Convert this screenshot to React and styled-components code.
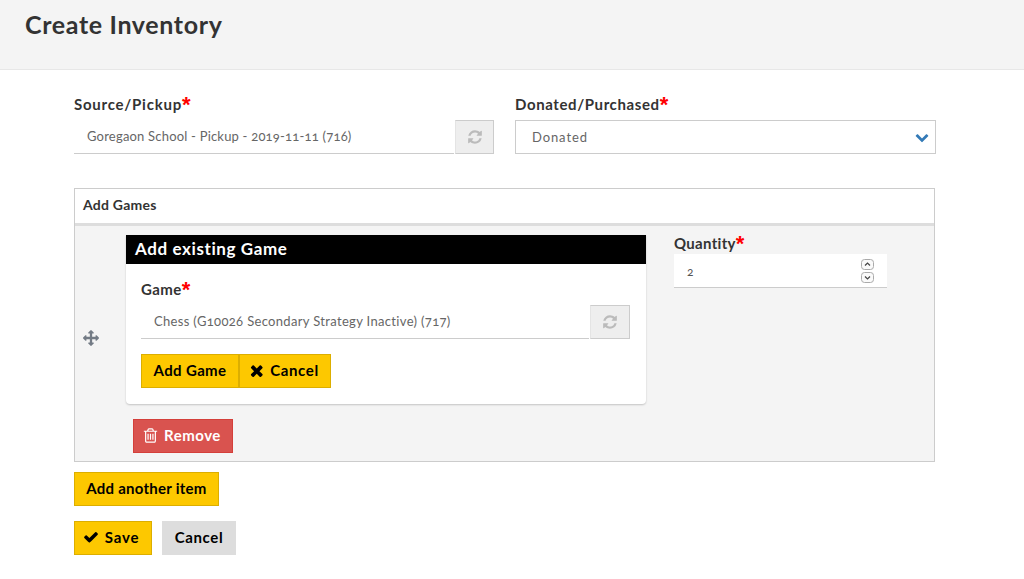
import React from "react";
import styled, { createGlobalStyle } from "styled-components";

const Global = createGlobalStyle`
  html, body { margin: 0; padding: 0; background: #fff; }
  body { font-family: Lato, "Open Sans", sans-serif; color: #333; font-size: 13px; font-variant-numeric: oldstyle-nums; }
`;
const Page = styled.div`width: 1024px; height: 579px; overflow: hidden;`;
const Header = styled.header`
  height: 70px; box-sizing: border-box; background: #f4f4f4; border-bottom: 1px solid #e7e7e7; padding: 9px 0 0 25px;
`;
const Title = styled.h1`
  margin: 0; font-size: 25px; line-height: 30px; font-weight: 700; color: #333; letter-spacing: .65px;
`;
const Content = styled.main`padding: 25px 88px 0 74px;`;
const TopRow = styled.div`display: grid; grid-template-columns: 420px 421px; column-gap: 21px; width: 862px;`;
const Field = styled.div`display: flex; flex-direction: column;`;
const Label = styled.label`
  display: block; font-size: 15px; line-height: 18px; font-weight: 700; color: #333; height: 20px; margin-bottom: ${p => p.$mb ?? 5}px;
  letter-spacing: ${p => p.$ls ?? .5}px; white-space: nowrap;
`;
const Star = styled.span`
  color: #f00; font-family: "Liberation Sans", sans-serif; font-size: 22px; line-height: 16px; letter-spacing: 0; vertical-align: -2px;
`;
const InputRow = styled.div`display: flex; height: 34px;`;
const TextValue = styled.div`
  flex: 1; box-sizing: border-box; height: 34px; border-bottom: 1px solid #ccc; background: #fff; margin-right: 1px;
  padding: 0 13px; font-size: 13px; line-height: 33px; color: #666; letter-spacing: ${p => p.$ls ?? .33}px; white-space: nowrap;
`;
const Addon = styled.div`
  width: ${p => p.$w || 39}px; height: 34px; box-sizing: border-box; background: #eee; border: 1px solid #ccc; border-left-color: #e4e4e4;
  display: flex; align-items: center; justify-content: center; color: #bbb;
`;
const Select = styled.div`
  height: 34px; box-sizing: border-box; border: 1px solid #ccc; display: flex; align-items: center; justify-content: space-between;
  padding: 0 6px 0 16px; font-size: 13px; color: #666; letter-spacing: .9px;
`;
const Chevron = styled.span`color: #337ab7; display: flex;`;
const Box = styled.section`
  margin-top: 34px; width: 861px; height: 274px; box-sizing: border-box; border: 1px solid #ccc; background: #f4f4f4; display: flex; flex-direction: column;
`;
const BoxHead = styled.div`
  height: 37px; box-sizing: border-box; background: #fff; border-bottom: 3px solid #ddd; padding: 0 8px; font-size: 14px; line-height: 32px; font-weight: 700; color: #333; letter-spacing: .25px;
`;
const BoxBody = styled.div`display: flex; padding: 9px 0 0 8px;`;
const Handle = styled.div`
  width: 43px; height: 206px; display: flex; align-items: center; color: #737b85; flex: none;
`;
const Left = styled.div`width: 520px; flex: none;`;
const Card = styled.div`
  height: 169px; box-sizing: border-box; background: #fff; border-radius: 0 0 4px 4px; box-shadow: 0 1px 2px rgba(0,0,0,.2);
`;
const CardHead = styled.div`
  height: 29px; background: #000; color: #fff; padding-left: 9px; font-size: 17px; font-weight: 700; line-height: 28px; letter-spacing: .6px;
`;
const CardBody = styled.div`padding: 16px 16px 0 15px;`;
const ButtonRow = styled.div`display: flex; margin-top: 15px;`;
const Btn = styled.button`
  font-family: inherit; box-sizing: border-box; height: 34px; width: ${p => p.$w}px; margin: 0;
  padding: 0 ${p => p.$pr || 0}px 2px 0;
  display: inline-flex; align-items: center; justify-content: center; gap: ${p => p.$gap || 6}px;
  font-size: 15px; font-weight: 700; letter-spacing: ${p => p.$ls ?? .3}px; color: ${p => p.$color || "#000"};
  background: ${p => p.$bg || "#fdc800"}; border: 1px solid ${p => p.$bd || "#dcae00"}; border-radius: 0; white-space: nowrap;
`;
const RemoveWrap = styled.div`margin: 15px 0 0 7px;`;
const QuantityCol = styled.div`width: 213px; margin: -1px 0 0 28px; flex: none;`;
const QuantityInput = styled.div`
  position: relative; box-sizing: border-box; height: 34px; background: #fff; border-bottom: 1px solid #ccc;
  padding-left: 13px; font-size: 12px; line-height: 35px; color: #555;
`;
const Spinner = styled.div`
  position: absolute; right: 13px; top: 5px; display: flex; flex-direction: column;
`;
const SpinBtn = styled.svg`width: 13px; height: 11px; display: block; margin-bottom: 2px;`;
const Actions = styled.div`display: flex; margin-top: ${p => p.$mt}px; gap: 10px;`;
const Glyph = styled.svg`display: block; flex: none; fill: currentColor;`;

const FA = {
  refresh: "M1639 1056q0 5-1 7-64 268-268 434.500t-478 166.500q-146 0-282.500-55t-243.500-157l-129 129q-19 19-45 19t-45-19-19-45v-448q0-26 19-45t45-19h448q26 0 45 19t19 45-19 45l-137 137q71 66 161 102t187 36q134 0 250-65t186-179q11-17 53-117 8-23 30-23h192q13 0 22.500 9.500t9.500 22.500zm25-800v448q0 26-19 45t-45 19h-448q-26 0-45-19t-19-45 19-45l138-138q-148-137-349-137-134 0-250 65t-186 179q-11 17-53 117-8 23-30 23h-199q-13 0-22.500-9.500t-9.500-22.500v-7q65-268 270-434.500t480-166.500q146 0 284 55.500t245 156.500l130-129q19-19 45-19t45 19 19 45z",
  chevron: "M1683 808l-742 741q-19 19-45 19t-45-19l-742-741q-19-19-19-45.500t19-45.500l166-165q19-19 45-19t45 19l531 531 531-531q19-19 45-19t45 19l166 165q19 19 19 45.500t-19 45.500z",
  arrows: "M1792 896q0 26-19 45l-256 256q-19 19-45 19t-45-19-19-45v-128h-384v384h128q26 0 45 19t19 45-19 45l-256 256q-19 19-45 19t-45-19l-256-256q-19-19-19-45t19-45 45-19h128v-384h-384v128q0 26-19 45t-45 19-45-19l-256-256q-19-19-19-45t19-45l256-256q19-19 45-19t45 19 19 45v128h384v-384h-128q-26 0-45-19t-19-45 19-45l256-256q19-19 45-19t45 19l256 256q19 19 19 45t-19 45-45 19h-128v384h384v-128q0-26 19-45t45-19 45 19l256 256q19 19 19 45z",
  times: "M1490 1322q0 40-28 68l-136 136q-28 28-68 28t-68-28l-294-294-294 294q-28 28-68 28t-68-28l-136-136q-28-28-28-68t28-68l294-294-294-294q-28-28-28-68t28-68l136-136q28-28 68-28t68 28l294 294 294-294q28-28 68-28t68 28l136 136q28 28 28 68t-28 68l-294 294 294 294q28 28 28 68z",
  check: "M1671 566q0 40-28 68l-724 724-136 136q-28 28-68 28t-68-28l-136-136-362-362q-28-28-28-68t28-68l136-136q28-28 68-28t68 28l294 295 656-657q28-28 68-28t68 28l136 136q28 28 28 68z",
  trash: "M704 736v576q0 14-9 23t-23 9h-64q-14 0-23-9t-9-23v-576q0-14 9-23t23-9h64q14 0 23 9t9 23zm256 0v576q0 14-9 23t-23 9h-64q-14 0-23-9t-9-23v-576q0-14 9-23t23-9h64q14 0 23 9t9 23zm256 0v576q0 14-9 23t-23 9h-64q-14 0-23-9t-9-23v-576q0-14 9-23t23-9h64q14 0 23 9t9 23zm128 724v-948h-896v948q0 22 7 40.500t14.500 27 10.500 8.500h832q3 0 10.500-8.500t14.500-27 7-40.500zm-672-1076h448l-48-117q-7-9-17-11h-317q-10 2-17 11zm928 32v64q0 14-9 23t-23 9h-96v948q0 83-47 143.500t-113 60.500h-832q-66 0-113-58.500t-47-141.500v-952h-96q-14 0-23-9t-9-23v-64q0-14 9-23t23-9h309l70-167q15-37 54-63t79-26h320q40 0 79 26t54 63l70 167h309q14 0 23 9t9 23z",
};
const Icon = ({ name, size, box = "0 0 1792 1792" }) => (
  <Glyph width={size} height={size} viewBox={box}><path d={FA[name]} /></Glyph>
);

const Spin = ({ up }) => (
  <SpinBtn viewBox="0 0 13 11">
    <rect x=".5" y=".5" width="12" height="10" rx="3" fill="#fafafa" stroke="#aaa" />
    <path d={up ? "M4 6.500l2.500-2.500L9 6.500" : "M4 4.500l2.500 2.500L9 4.500"} fill="none" stroke="#444" strokeWidth="1.2" />
  </SpinBtn>
);

export default function App() {
  return (
    <Page>
      <Global />
      <Header><Title>Create Inventory</Title></Header>
      <Content>
        <TopRow>
          <Field>
            <Label $ls={.76}>Source/Pickup<Star>*</Star></Label>
            <InputRow>
              <TextValue $ls={.2}>Goregaon School - Pickup - 2019-11-11 (716)</TextValue>
              <Addon><Icon name="refresh" size={16} /></Addon>
            </InputRow>
          </Field>
          <Field>
            <Label $ls={.6}>Donated/Purchased<Star>*</Star></Label>
            <Select>Donated<Chevron><Icon name="chevron" size={14} /></Chevron></Select>
          </Field>
        </TopRow>
        <Box>
          <BoxHead>Add Games</BoxHead>
          <BoxBody>
            <Handle><Icon name="arrows" size={16} /></Handle>
            <Left>
              <Card>
                <CardHead>Add existing Game</CardHead>
                <CardBody>
                  <Label $ls={.4}>Game<Star>*</Star></Label>
                  <InputRow>
                    <TextValue>Chess (G10026 Secondary Strategy Inactive) (717)</TextValue>
                    <Addon $w={40}><Icon name="refresh" size={16} /></Addon>
                  </InputRow>
                  <ButtonRow>
                    <Btn $w={98} $ls={.35}>Add Game</Btn>
                    <Btn $w={92} $gap={7} $ls={.6} $pr={1}><Icon name="times" size={13} box="246 238 1244 1316" />Cancel</Btn>
                  </ButtonRow>
                </CardBody>
              </Card>
              <RemoveWrap>
                <Btn $w={100} $gap={5} $ls={.5} $pr={3} $bg="#d9534f" $bd="#d43f3a" $color="#fff"><Icon name="trash" size={17} />Remove</Btn>
              </RemoveWrap>
            </Left>
            <QuantityCol>
              <Label $ls={.3} $mb={0}>Quantity<Star>*</Star></Label>
              <QuantityInput>
                2
                <Spinner><Spin up /><Spin /></Spinner>
              </QuantityInput>
            </QuantityCol>
          </BoxBody>
        </Box>
        <Actions $mt={10}><Btn $w={145} $ls={.25}>Add another item</Btn></Actions>
        <Actions $mt={15}>
          <Btn $w={78} $ls={.8} $pr={4}><Icon name="check" size={16} />Save</Btn>
          <Btn $w={74} $ls={.6} $bg="#ddd" $bd="#ddd">Cancel</Btn>
        </Actions>
      </Content>
    </Page>
  );
}
